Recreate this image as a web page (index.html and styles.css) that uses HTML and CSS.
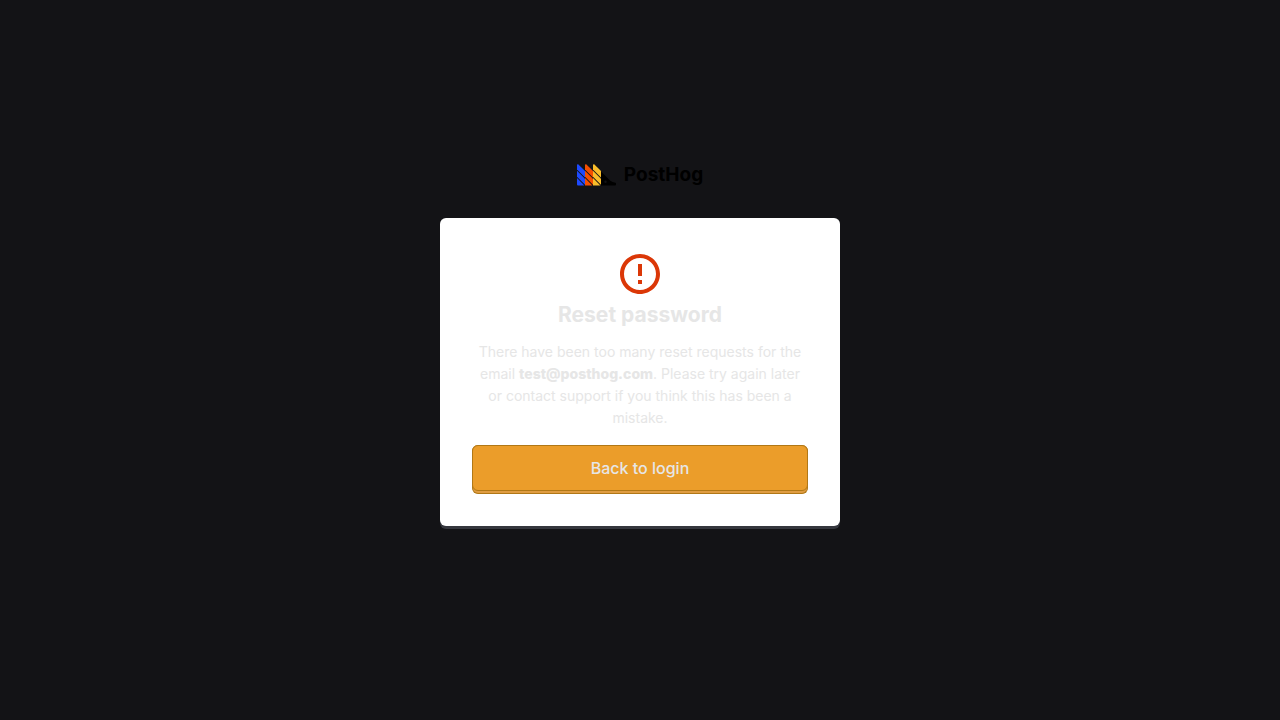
FILE: index.html
```html
<!DOCTYPE html>
<html lang="en">
<head>
<meta charset="utf-8">
<title>Reset password • PostHog</title>
<meta name="viewport" content="width=device-width, initial-scale=1">
<link rel="stylesheet" href="styles.css">
</head>
<body>
<div class="bridge-page">
  <header class="logo">
    <svg class="logo-mark" viewBox="0 0 39 22" aria-hidden="true">
      <g fill="#1d4aff"><path d="M0 1Q0 0 1.200.2L8 7V13.600L0 5.600Z"/><path d="M0 6.800L8 14.800V20.800L0 12.800Z"/><path d="M0 14L7.400 21.400H1Q0 21.400 0 20.400Z"/></g>
      <g fill="#f54e00"><path d="M8 1Q8 0 9.200.2L16 7V13.600L8 5.600Z"/><path d="M8 6.800L16 14.800V20.800L8 12.800Z"/><path d="M8 14L15.400 21.400H8Z"/></g>
      <g fill="#f9bd2b"><path d="M16 1Q16 0 17.200.2L24 7V13.600L16 5.600Z"/><path d="M16 6.800L24 14.800V20.800L16 12.800Z"/><path d="M16 14L23.400 21.400H16Z"/></g>
      <path fill="#000" fill-rule="evenodd" d="M24 7.500L33.300 16.800Q35.300 18.500 38.500 18.800Q39 18.900 39 19.400V20.400Q39 21.400 38 21.400H24ZM28.500 16.600A1.200 1.200 0 1 0 28.500 19A1.200 1.200 0 1 0 28.500 16.600Z"/>
    </svg>
    <span class="logo-name">PostHog</span>
  </header>
  <main class="card">
    <svg class="error-icon" viewBox="0 0 24 24" aria-hidden="true"><path fill="currentColor" d="M11 15h2v2h-2zm0-8h2v6h-2zm.99-5C6.470 2 2 6.480 2 12s4.470 10 9.990 10C17.520 22 22 17.520 22 12S17.520 2 11.990 2zM12 20c-4.420 0-8-3.580-8-8s3.580-8 8-8 8 3.580 8 8-3.580 8-8 8z"/></svg>
    <h1 class="title">Reset password</h1>
    <p class="message">There have been too many reset requests for the email <strong>test@posthog.com</strong>. Please try again later or contact support if you think this has been a mistake.</p>
    <a class="button" href="#login"><span class="button-face">Back to login</span></a>
  </main>
</div>
</body>
</html>
```
FILE: styles.css
```css
* {
  box-sizing: border-box;
}

body {
  margin: 0;
  background: #131316;
  color: #e6e6e6;
  font-family: Inter, "Liberation Sans", sans-serif;
  font-size: 14px;
  line-height: 22px;
}

.bridge-page {
  min-height: 100vh;
  padding: 16px 16px 46px;
  display: flex;
  flex-direction: column;
  align-items: center;
  justify-content: center;
  gap: 32px;
}

.logo {
  display: flex;
  align-items: center;
  gap: 8px;
  color: #000;
}

.logo-mark {
  width: 39px;
  height: 22px;
}

.logo-name {
  font-size: 19px;
  font-weight: 700;
}

.card {
  width: 100%;
  max-width: 400px;
  padding: 32px;
  background: #fff;
  border-radius: 6px;
  box-shadow: 0 3px 0 #35373e;
  text-align: center;
}

.error-icon {
  display: block;
  width: 48px;
  height: 48px;
  margin: 0 auto;
  color: #db3707;
}

.title {
  margin: 0 0 10px;
  padding-top: 1px;
  font-size: 21px;
  font-weight: 700;
  line-height: 32px;
}

.message {
  margin: 0 0 16px;
  font-weight: 400;
}

.message strong {
  font-weight: 800;
}

.button {
  display: block;
  padding-bottom: 2px;
  background: #df9c42;
  border: 1px solid #b17816;
  border-top: 0;
  border-radius: 6px;
  color: #e6e6e6;
  font-size: 16px;
  font-weight: 500;
  text-decoration: none;
}

.button-face {
  display: block;
  margin: 0 -1px;
  padding: 11px 16px;
  background: #eb9d2a;
  border: 1px solid #b17816;
  border-radius: 6px;
}
```
